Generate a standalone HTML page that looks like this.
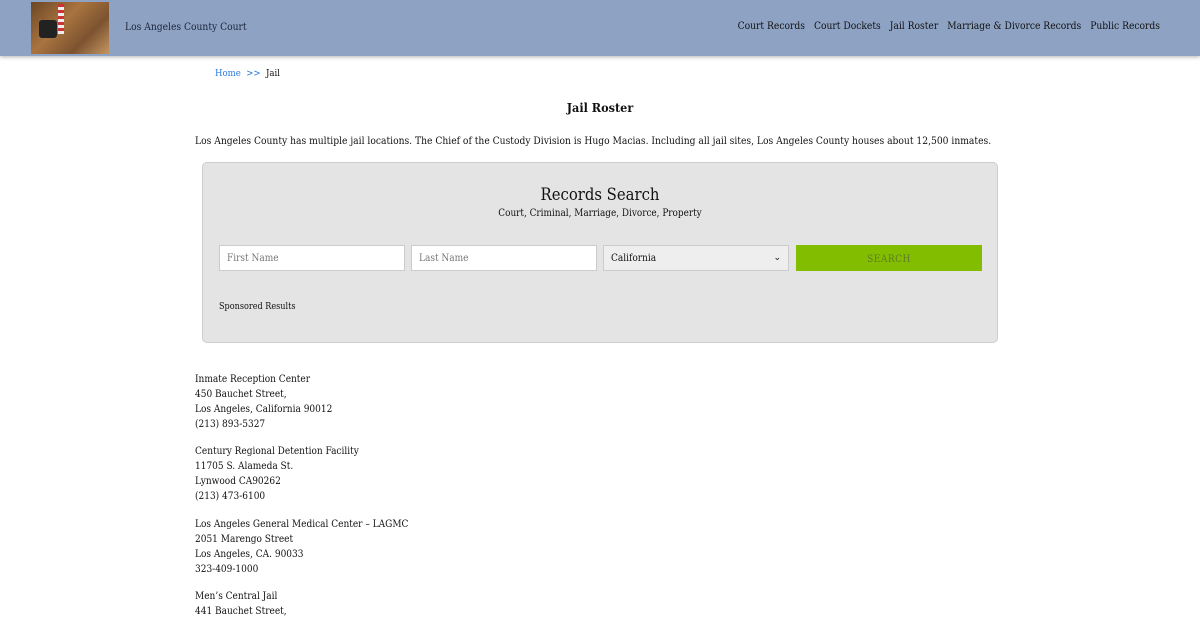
<!DOCTYPE html>
<html><head><meta charset="utf-8"><style>
*{box-sizing:border-box;margin:0;padding:0}
body{width:1200px;height:620px;overflow:hidden;background:#fff;font-family:"DejaVu Serif Condensed","Liberation Serif",serif;color:#111;font-size:11px}
.hdr{position:absolute;left:0;top:0;width:1200px;height:56px;background:#8ea3c4;box-shadow:0 1px 4px rgba(0,0,0,.3)}
.logo{position:absolute;left:31px;top:2px;width:78px;height:52px;background:linear-gradient(135deg,#6b4526,#a9743f 40%,#7c5330 70%,#c49660)}
.logo:before{content:"";position:absolute;left:8px;top:18px;width:18px;height:18px;background:#222;border-radius:3px}
.logo:after{content:"";position:absolute;left:27px;top:2px;width:6px;height:30px;background:repeating-linear-gradient(#c33 0 3px,#eee 3px 6px)}
.site{position:absolute;left:125px;top:22px;font-size:10.2px;color:#1a2338}
.nav{position:absolute;right:40px;top:21px;font-size:10.2px;color:#111}
.nav span{margin-left:9px}
.bc{position:absolute;left:215px;top:68px;font-size:9.5px}
.bc a{color:#2a7ae2}
h1{position:absolute;left:0;width:1200px;text-align:center;top:100px;font-size:12.5px;font-weight:bold}
.intro{position:absolute;left:195px;top:136px;font-size:10.2px}
.box{position:absolute;left:202px;top:162px;width:796px;height:181px;background:#e4e4e4;border:1px solid #ccc;border-radius:5px}
.box h2{position:absolute;top:22px;width:100%;text-align:center;font-weight:normal;font-size:16.5px}
.box .sub{position:absolute;top:45px;width:100%;text-align:center;font-size:9.9px}
.in{position:absolute;top:82px;height:26px;background:#fff;border:1px solid #ccc;font-size:10px;color:#777;padding:7px 7px}
.sel{background:#eee;color:#111}
.btn{position:absolute;left:593px;top:82px;width:186px;height:26px;background:#82bd00;color:#5d7c26;text-align:center;font-size:10px;padding-top:9px;letter-spacing:.5px}
.sp{position:absolute;left:16px;top:139px;font-size:9px}
.addr{position:absolute;left:195px;font-size:10px;line-height:15px}
</style></head><body>
<div class="hdr"><div class="logo"></div><div class="site">Los Angeles County Court</div>
<div class="nav"><span>Court Records</span><span>Court Dockets</span><span>Jail Roster</span><span>Marriage &amp; Divorce Records</span><span>Public Records</span></div></div>
<div class="bc"><a>Home</a> <a>&nbsp;&gt;&gt;</a>&nbsp;&nbsp;Jail</div>
<h1>Jail Roster</h1>
<div class="intro">Los Angeles County has multiple jail locations. The Chief of the Custody Division is Hugo Macias. Including all jail sites, Los Angeles County houses about 12,500 inmates.</div>
<div class="box"><h2>Records Search</h2><div class="sub">Court, Criminal, Marriage, Divorce, Property</div>
<div class="in" style="left:16px;width:186px">First Name</div>
<div class="in" style="left:208px;width:186px">Last Name</div>
<div class="in sel" style="left:400px;width:186px">California<span style="float:right;font-size:9px">&#8964;</span></div>
<div class="btn">SEARCH</div>
<div class="sp">Sponsored Results</div></div>
<div class="addr" style="top:372px">Inmate Reception Center<br>450 Bauchet Street,<br>Los Angeles, California 90012<br>(213) 893-5327</div>
<div class="addr" style="top:444px">Century Regional Detention Facility<br>11705 S. Alameda St.<br>Lynwood CA90262<br>(213) 473-6100</div>
<div class="addr" style="top:517px">Los Angeles General Medical Center – LAGMC<br>2051 Marengo Street<br>Los Angeles, CA. 90033<br>323-409-1000</div>
<div class="addr" style="top:589px">Men’s Central Jail<br>441 Bauchet Street,</div>
</body></html>
